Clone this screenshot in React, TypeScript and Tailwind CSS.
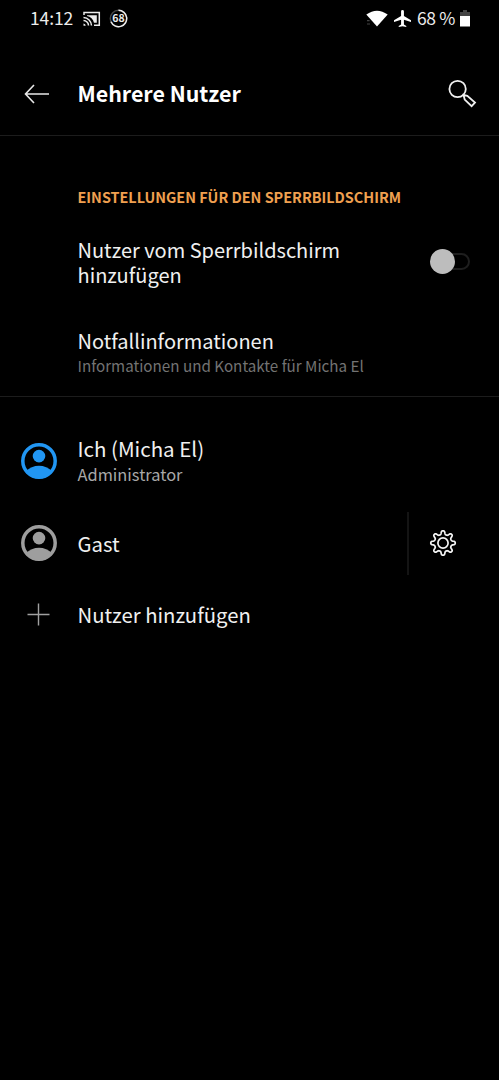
import React, { useState } from 'react';

const FONT = "font-['Noto_Sans_CJK_SC','Noto_Sans',sans-serif]";

// Eight-tooth cog outline, centred on 14,14
const gearPath =
  Array.from({ length: 160 }, (_, i) => {
    const a = (i / 160) * Math.PI * 2;
    const r = 10.5 + 1.9 * Math.tanh(1.8 * Math.cos(8 * a) - 0.3);
    return `${i ? 'L' : 'M'}${(14 + r * Math.sin(a)).toFixed(2)} ${(14 - r * Math.cos(a)).toFixed(2)}`;
  }).join('') + 'Z';

function Avatar({ className, id }: { className: string; id: string }) {
  return (
    <svg viewBox="0 0 36 36" className={`w-9 h-9 ${className}`} fill="currentColor">
      <clipPath id={id}>
        <circle cx="18" cy="18" r="17.5" />
      </clipPath>
      <circle cx="18" cy="18" r="16.2" fill="none" stroke="currentColor" strokeWidth="3.5" />
      <circle cx="18" cy="13.1" r="6.3" />
      <circle cx="18" cy="41.5" r="18.7" clipPath={`url(#${id})`} />
    </svg>
  );
}

function StatusBar() {
  return (
    <div className="h-[37px] flex items-center pl-[30px] pr-[29px] text-[#ececec] text-[17.5px]">
      <span className="w-[53px] -mt-[2px] leading-none tracking-[-0.1px]">14:12</span>
      <svg className="w-[18px] h-[16px]" viewBox="0 0 18 16" fill="none" stroke="currentColor" strokeWidth="1.5">
        <path d="M1 4V1.5H16.3V14.3H11" />
        <path d="M4 4.2H13.8V11.8H11C10.2 8.2 7.5 5.6 4 5Z" fill="currentColor" stroke="none" />
        <path d="M.5 6.6a8.2 8.2 0 0 1 8 8M.5 9.6a5 5 0 0 1 5 5" />
        <path d="M.5 12.4a2.4 2.4 0 0 1 2.2 2.4H.5Z" fill="currentColor" stroke="none" />
      </svg>
      <div className="relative ml-[8px] w-[19px] h-[19px] flex items-center justify-center">
        <svg className="absolute inset-0" viewBox="0 0 19 19" fill="none" strokeWidth="1.5">
          <circle cx="9.5" cy="9.5" r="8.2" stroke="#444" />
          <path d="M9.5 1.3a8.2 8.2 0 1 1-7.5 11.5" stroke="currentColor" />
        </svg>
        <span className="-mt-px text-[10.5px] font-bold leading-none">68</span>
      </div>
      <div className="ml-auto flex items-center">
        <svg className="w-[22px] h-[17px]" viewBox="0 0 22 17" fill="#fff">
          <path d="M.3 4.600Q11-3 21.700 4.600L11 16.600Z" />
          <path d="M1 10h2.600v1.200H1zM1 13.400h3v1.200H1z" fill="#444" />
        </svg>
        <svg className="ml-[6px] w-[17px] h-[17px]" viewBox="3 2 18 20" preserveAspectRatio="none" fill="#fff">
          <path d="M21 16v-2l-7.500-5V3.500a1.500 1.500 0 0 0-3 0V9L3 14v2l7.500-2.500V19l-2.500 1.800V22l4-1 4 1v-1.200L13.500 19v-5.500z" />
        </svg>
        <span className="ml-[6px] w-[43px] -mt-[2px] leading-none whitespace-nowrap tracking-[-0.4px]">68 %</span>
        <svg className="w-[10px] h-[17px]" viewBox="0 0 10 17">
          <path d="M3 0h4v2h3v5H0V2h3z" fill="#444" />
          <path d="M0 6h10v10.500H0z" fill="#fff" />
        </svg>
      </div>
    </div>
  );
}

export default function App() {
  const [lockScreenAdd, setLockScreenAdd] = useState(false);

  return (
    <div className={`w-full h-[1080px] bg-black text-[#f0f0f0] ${FONT} overflow-hidden`}>
      <StatusBar />

      {/* Toolbar */}
      <header className="h-[99px] pt-[16px] flex items-start border-b border-[#1c1c1c]">
        <button className="ml-[24px] mt-[30px] w-[53.5px]">
          <svg className="w-[26px] h-[22px]" viewBox="0 0 26 22" fill="none" stroke="#e8e8e8" strokeWidth="1.6">
            <path d="M1.500 11H25M10 2 1.500 11l8.500 9" />
          </svg>
        </button>
        <h1 className="mt-[26px] text-[21.4px] leading-[28px] font-bold text-white">Mehrere Nutzer</h1>
        <button className="ml-auto mr-[22px] mt-[26px]">
          <svg className="w-[29px] h-[29px]" viewBox="0 0 29 29" fill="none" stroke="#f0f0f0" strokeWidth="1.8">
            <circle cx="9.600" cy="10" r="8.200" />
            <path d="M15.500 16 19.300 16.800 27 23.600 23.600 27.200 16.700 20.600Z" />
          </svg>
        </button>
      </header>

      {/* Lock screen settings */}
      <section className="h-[261px] pl-[77.5px] border-b border-[#1c1c1c]">
        <h2 className="pt-[51px] text-[14.4px] leading-[20px] font-bold text-[#f0a050] whitespace-nowrap">
          EINSTELLUNGEN FÜR DEN SPERRBILDSCHIRM
        </h2>
        <div className="mt-[31px] flex items-start justify-between pr-[29px]">
          <p className="w-[290px] text-[20px] leading-[24.5px]">Nutzer vom Sperrbildschirm hinzufügen</p>
          <button
            onClick={() => setLockScreenAdd(!lockScreenAdd)}
            className={`mt-[11px] w-[40px] h-[25px] flex items-center ${lockScreenAdd ? 'flex-row-reverse' : ''}`}
          >
            <span className="relative z-10 w-[25px] h-[25px] rounded-full bg-[#bdbdbd]" />
            <span className="-ml-[15px] w-[30px] h-[17px] rounded-full border-2 border-[#1e1e1e]" />
          </button>
        </div>
        <div className="mt-[41px]">
          <p className="text-[20px] leading-[26px]">Notfallinformationen</p>
          <p className="text-[15.2px] leading-[22px] text-[#737373]">Informationen und Kontakte für Micha El</p>
        </div>
      </section>

      {/* Users */}
      <ul className="pt-[29px]">
        <li className="h-[70px] flex items-center">
          <Avatar id="me" className="ml-[21px] mr-[20.5px] text-[#2196f3]" />
          <div>
            <p className="-mt-px mb-px text-[20.5px] leading-[27px]">Ich (Micha El)</p>
            <p className="text-[16.4px] leading-[23px] text-[#a8a8a8]">Administrator</p>
          </div>
        </li>
        <li className="mt-[15px] h-[64px] flex items-center">
          <Avatar id="guest" className="ml-[21px] mr-[20.5px] text-[#9e9e9e]" />
          <p className="text-[20.3px] leading-[27px]">Gast</p>
          <button className="ml-auto h-[63px] w-[92px] pl-[20px] border-l-2 border-[#141414]">
            <svg className="w-[28px] h-[28px]" viewBox="0 0 28 28" fill="none" stroke="#f5f5f5" strokeWidth="1.700">
              <path d={gearPath} strokeLinejoin="round" />
              <circle cx="14" cy="14" r="5.100" />
            </svg>
          </button>
        </li>
        <li className="mt-[8px] h-[62px] flex items-center">
          <svg className="ml-[27px] mr-[27.5px] w-[23px] h-[23px]" viewBox="0 0 23 23" stroke="#a0a0a0" strokeWidth="1.400">
            <path d="M.5 11.500h22M11.500 .5v22" />
          </svg>
          <p className="text-[20.3px] leading-[27px]">Nutzer hinzufügen</p>
        </li>
      </ul>
    </div>
  );
}
